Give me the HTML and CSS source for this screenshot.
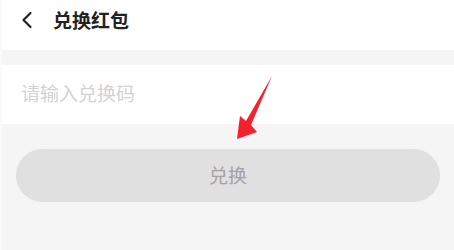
FILE: index.html
```html
<!DOCTYPE html>
<html lang="zh">
<head>
<meta charset="utf-8">
<link rel="stylesheet" href="styles.css">
</head>
<body>
<div class="page">
  <header class="header">
    <svg class="back" width="12" height="18" viewBox="0 0 12 18"><path d="M9.5 2 L2.5 9 L9.5 16" fill="none" stroke="#222" stroke-width="2.2" stroke-linecap="round" stroke-linejoin="round"/></svg>
    <span class="title">兑换红包</span>
  </header>
  <div class="input-row">
    <span class="placeholder">请输入兑换码</span>
  </div>
  <div class="btn-wrap">
    <div class="btn">兑换</div>
  </div>
  <svg class="arrow" width="454" height="250" viewBox="0 0 454 250"><polygon points="272,76 251,125 257,132 237,139 240,116 246,121" fill="#f5222d"/></svg>
</div>
</body>
</html>
```
FILE: styles.css
```css
html, body {
  margin: 0;
  padding: 0;
}
body {
  width: 454px;
  height: 250px;
  overflow: hidden;
  background: #f5f5f5;
  font-family: "Noto Sans CJK SC", "Noto Sans", sans-serif;
}
.page {
  position: relative;
  height: 250px;
  border-left: 2px solid #fafafa;
  box-sizing: border-box;
}
.header {
  height: 50px;
  background: #fff;
  display: flex;
  align-items: center;
  padding-left: 19px;
  padding-bottom: 11px;
  box-sizing: border-box;
}
.back {
  display: block;
}
.title {
  margin-left: 20px;
  font-size: 19px;
  font-weight: 700;
  color: #222;
  line-height: 1;
}
.input-row {
  margin-top: 15px;
  height: 59px;
  background: #fff;
  display: flex;
  align-items: center;
  padding-left: 19px;
  padding-bottom: 4px;
  box-sizing: border-box;
}
.placeholder {
  font-size: 19px;
  color: #d2d2d2;
  line-height: 1;
}
.btn-wrap {
  padding: 25px 14px 0 14px;
}
.btn {
  height: 53px;
  border-radius: 27px;
  background: #e0e0e0;
  color: #a3a3a3;
  font-size: 19px;
  display: flex;
  align-items: center;
  justify-content: center;
  padding-bottom: 2px;
  box-sizing: border-box;
}
.arrow {
  position: absolute;
  left: -2px;
  top: 0;
}
```
